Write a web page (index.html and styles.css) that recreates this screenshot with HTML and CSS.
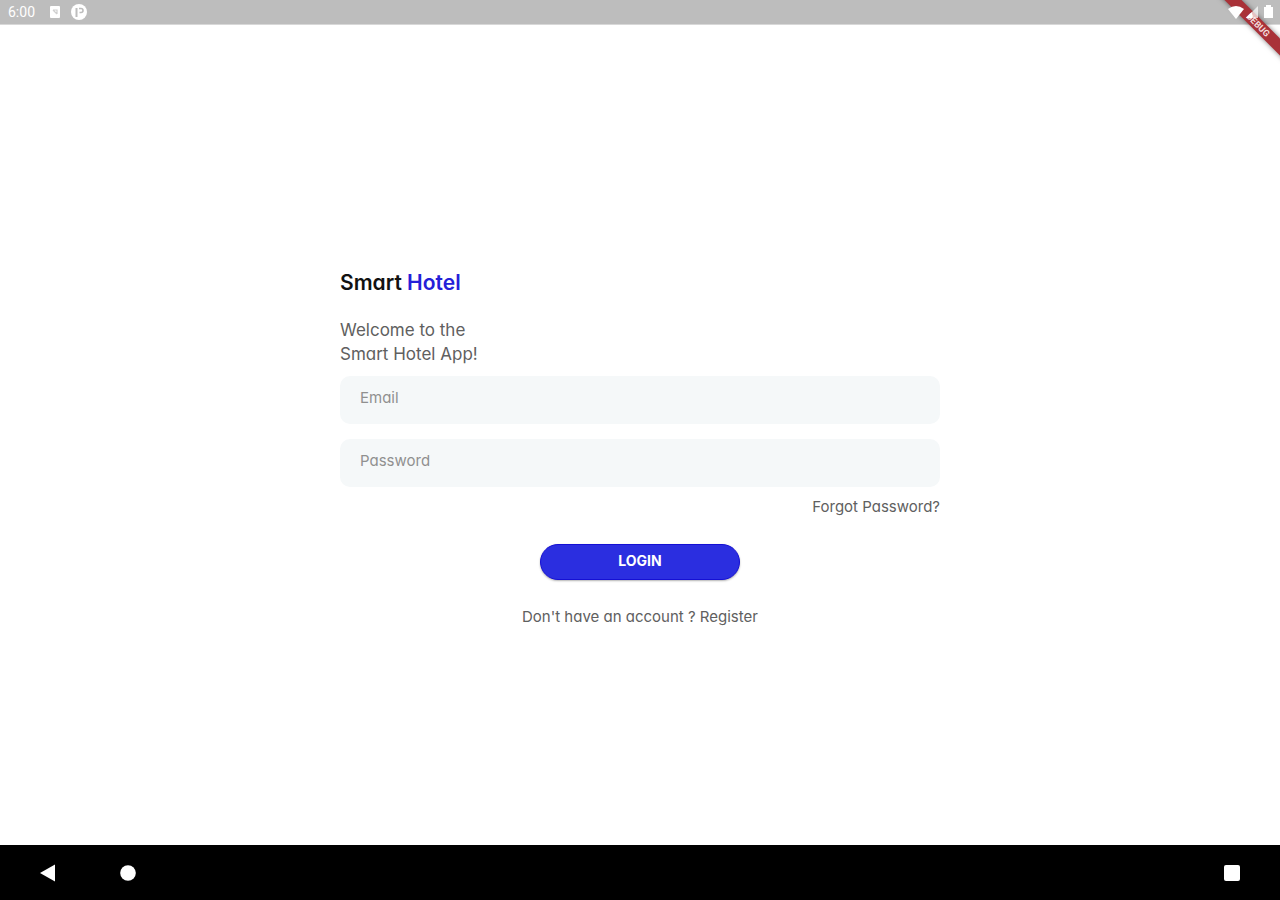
FILE: index.html
```html
<!DOCTYPE html>
<html lang="en">
<head>
<meta charset="utf-8">
<meta name="viewport" content="width=device-width, initial-scale=1">
<title>Smart Hotel</title>
<link rel="stylesheet" href="styles.css">
</head>
<body>
<header class="status">
  <span class="clock">6:00</span>
  <svg class="status-icon" width="12" height="14" viewBox="0 0 12 14" aria-hidden="true"><rect x="1" y="1" width="10" height="12" rx="1" fill="#fff"/><path d="M4 5h4v4M4 5l4 4" fill="none" stroke="#cfcfcf" stroke-width="1.200"/></svg>
  <svg class="status-icon" width="16" height="16" viewBox="0 0 16 16" aria-hidden="true"><circle cx="8" cy="8" r="8" fill="#fff"/><path d="M5.500 4v9" stroke="#bdbdbd" stroke-width="2"/><path d="M8 4.500h2a2 2 0 0 1 0 4H8.500" fill="none" stroke="#bdbdbd" stroke-width="1.600"/></svg>
  <svg class="signals" width="48" height="16" viewBox="0 0 48 16" aria-hidden="true"><path d="M0 5Q8-1 16 5L8 15z" fill="#fff"/><path d="M18 14L30 2v12z" fill="#fff" fill-opacity=".7"/><path d="M18 14l6-6v6z" fill="#fff"/><path d="M36 3h2V1h5v2h2v11h-9z" fill="#fff"/></svg>
  <div class="ribbon-corner"><span class="ribbon">DEBUG</span></div>
</header>
<main class="page">
  <form class="login">
    <h1 class="brand">Smart <span class="brand-accent">Hotel</span></h1>
    <p class="welcome">Welcome to the<br>Smart Hotel App!</p>
    <input class="field" type="email" placeholder="Email" aria-label="Email">
    <input class="field" type="password" placeholder="Password" aria-label="Password">
    <a class="forgot" href="#">Forgot Password?</a>
    <button class="submit" type="submit">LOGIN</button>
    <p class="register">Don't have an account ? <a class="register-link" href="#">Register</a></p>
  </form>
</main>
<nav class="navbar" aria-label="System">
  <button class="nav-button" type="button" aria-label="Back"><svg width="16" height="18" viewBox="0 0 16 18"><path d="M0 9L15 0.500V17.500z" fill="#fff"/></svg></button>
  <button class="nav-button" type="button" aria-label="Home"><svg width="16" height="16" viewBox="0 0 16 16"><circle cx="8" cy="8" r="7.800" fill="#fff"/></svg></button>
  <button class="nav-button nav-recent" type="button" aria-label="Recent apps"><svg width="16" height="16" viewBox="0 0 16 16"><rect width="16" height="16" rx="2" fill="#fff"/></svg></button>
</nav>
</body>
</html>
```
FILE: styles.css
```css
* {
  box-sizing: border-box;
}

body {
  display: flex;
  flex-direction: column;
  min-height: 100vh;
  margin: 0;
  background: #fff;
  color: #606060;
  font-family: Inter, "Open Sans", sans-serif;
  font-feature-settings: "cv11";
}

a {
  color: inherit;
  text-decoration: none;
}

.status {
  position: relative;
  display: flex;
  align-items: center;
  height: 25px;
  padding: 0 4px 0 8px;
  border-bottom: 1px solid #d8d8d8;
  background: #bdbdbd;
  color: #fff;
}

.clock {
  font: 14px/24px Roboto, sans-serif;
}

.status-icon {
  margin-left: 14px;
}

.status-icon + .status-icon {
  margin-left: 10px;
}

.signals {
  position: relative;
  z-index: 2;
  margin-left: auto;
}

.ribbon-corner {
  position: absolute;
  top: 0;
  right: 0;
  z-index: 1;
  width: 64px;
  height: 64px;
  overflow: hidden;
}

.ribbon {
  position: absolute;
  top: 19px;
  left: -8px;
  width: 100px;
  background: #a93238;
  box-shadow: 0 0 5px rgba(0, 0, 0, 0.5);
  color: #f3dcdd;
  font: 700 9px/12px Roboto, sans-serif;
  text-align: center;
  transform: rotate(45deg);
}

.page {
  display: flex;
  flex: 1;
  align-items: center;
  justify-content: center;
  padding: 20px;
}

.login {
  display: flex;
  flex-direction: column;
  align-items: center;
  width: 100%;
  max-width: 600px;
  padding-top: 24px;
}

.brand {
  align-self: flex-start;
  margin: 0 0 20px;
  color: #111;
  font-size: 21px;
  font-weight: 600;
  line-height: 30px;
}

.brand-accent {
  color: #2420d8;
}

.welcome {
  align-self: flex-start;
  margin: 0 0 10px;
  font-size: 17px;
  line-height: 24px;
}

.field {
  width: 100%;
  height: 48px;
  margin-bottom: 15px;
  padding: 0 20px 4px;
  border: 0;
  border-radius: 10px;
  background: #f5f8f9;
  color: #333;
  font: inherit;
  font-size: 15px;
}

.field::placeholder {
  color: #909090;
  opacity: 1;
}

.forgot {
  align-self: flex-end;
  margin-top: -5px;
  font-size: 15px;
  line-height: 20px;
}

.submit {
  width: 200px;
  height: 36px;
  margin: 27px 0;
  padding: 0 0 2px;
  border: 1px solid #1510d4;
  border-radius: 18px;
  background: #2b2ee0;
  box-shadow: 0 1px 2px rgba(0, 0, 0, 0.3);
  color: #fff;
  font: inherit;
  font-size: 14px;
  font-weight: 700;
}

.register {
  margin: 0;
  font-size: 15px;
  line-height: 20px;
}

.navbar {
  display: flex;
  align-items: center;
  gap: 64px;
  height: 55px;
  padding: 0 40px;
  background: #000;
}

.nav-button {
  display: flex;
  padding: 0;
  border: 0;
  background: none;
}

.nav-recent {
  margin-left: auto;
}
```
